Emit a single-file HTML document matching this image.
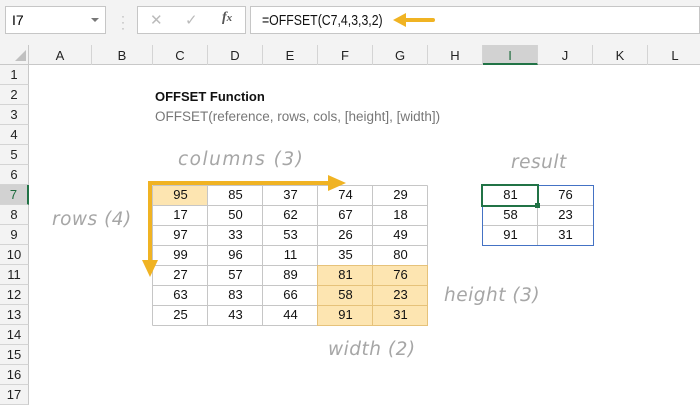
<!DOCTYPE html>
<html><head><style>
body{margin:0;width:700px;height:400px;overflow:hidden;background:#fff;font-family:"Liberation Sans",sans-serif;position:relative}
.a{position:absolute}
.ch{position:absolute;top:45px;height:20px;line-height:21px;text-align:center;font-size:13px;color:#222;border-right:1px solid #d4d4d4;box-sizing:border-box}
.rh{position:absolute;left:0;width:29px;height:20px;line-height:20px;text-align:center;font-size:13px;color:#222;border-bottom:1px solid #d4d4d4;box-sizing:border-box;background:#f3f3f3;border-right:1px solid #c8c8c8}
.c{position:absolute;width:55px;height:20px;line-height:20px;text-align:center;font-size:13px;color:#111}
.hand{position:absolute;color:#a6a6a6;font-family:"DejaVu Sans",sans-serif;font-style:italic;font-size:18.5px;letter-spacing:0.5px}
</style></head><body>
<div class="a" style="left:0;top:0;width:700px;height:45px;background:#f3f3f3"></div>
<div class="a" style="left:5px;top:6px;width:101px;height:28px;background:#fff;border:1px solid #c6c6c6;box-sizing:border-box;font-size:14px;line-height:26px;padding-left:6px">I7</div>
<div class="a" style="left:91px;top:18px;width:0;height:0;border-left:4px solid transparent;border-right:4px solid transparent;border-top:4px solid #777"></div>
<div class="a" style="left:121px;top:13px;color:#aaa;font-size:12px;line-height:6px">·<br>·<br>·</div>
<div class="a" style="left:137px;top:6px;width:109px;height:28px;background:#fff;border:1px solid #c6c6c6;box-sizing:border-box"></div>
<div class="a" style="left:150px;top:11px;color:#bbb;font-size:15px">✕</div>
<div class="a" style="left:185px;top:11px;color:#bbb;font-size:15px">✓</div>
<div class="a" style="left:222px;top:10px;color:#555;font-size:14px;font-style:italic;font-family:'Liberation Serif',serif;font-weight:bold">f<span style="font-size:11px">x</span></div>
<div class="a" style="left:250px;top:6px;width:450px;height:28px;background:#fff;border:1px solid #c6c6c6;box-sizing:border-box"></div>
<div class="a" style="left:262px;top:7px;font-size:15px;line-height:27px;color:#111;transform:scaleX(0.82);transform-origin:0 0;white-space:nowrap">=OFFSET(C7,4,3,3,2)</div>
<svg class="a" style="left:391px;top:12px" width="45" height="16"><path d="M13 8H42" stroke="#f0b323" stroke-width="4" stroke-linecap="round"/><path d="M2 8L15 1V15Z" fill="#f0b323"/></svg>
<div class="a" style="left:0;top:45px;width:700px;height:20px;background:#f3f3f3;border-bottom:1px solid #c8c8c8;box-sizing:border-box"></div>
<div class="a" style="left:0;top:45px;width:29px;height:20px;border-right:1px solid #c8c8c8;box-sizing:border-box"></div>
<div class="a" style="left:15px;top:50px;width:0;height:0;border-left:11px solid transparent;border-bottom:11px solid #c0c0c0"></div>
<div class="ch" style="left:29px;width:63px">A</div>
<div class="ch" style="left:92px;width:61px">B</div>
<div class="ch" style="left:153px;width:55px">C</div>
<div class="ch" style="left:208px;width:55px">D</div>
<div class="ch" style="left:263px;width:55px">E</div>
<div class="ch" style="left:318px;width:55px">F</div>
<div class="ch" style="left:373px;width:55px">G</div>
<div class="ch" style="left:428px;width:55px">H</div>
<div class="ch" style="left:483px;width:55px;background:#d2d2d2;border-bottom:2px solid #217346;color:#1e6b3d">I</div>
<div class="ch" style="left:538px;width:55px">J</div>
<div class="ch" style="left:593px;width:55px">K</div>
<div class="ch" style="left:648px;width:55px">L</div>
<div class="rh" style="top:65px">1</div><div class="rh" style="top:85px">2</div><div class="rh" style="top:105px">3</div><div class="rh" style="top:125px">4</div><div class="rh" style="top:145px">5</div><div class="rh" style="top:165px">6</div>
<div class="rh" style="top:185px;background:#d2d2d2;color:#1e6b3d;border-right:2px solid #217346">7</div>
<div class="rh" style="top:205px">8</div><div class="rh" style="top:225px">9</div><div class="rh" style="top:245px">10</div><div class="rh" style="top:265px">11</div><div class="rh" style="top:285px">12</div><div class="rh" style="top:305px">13</div><div class="rh" style="top:325px">14</div><div class="rh" style="top:345px">15</div><div class="rh" style="top:365px">16</div><div class="rh" style="top:385px">17</div>
<div class="a" style="left:155px;top:89px;font-size:13px;font-weight:bold;color:#111">OFFSET Function</div>
<div class="a" style="left:155px;top:109px;font-size:13.5px;color:#777">OFFSET(reference, rows, cols, [height], [width])</div>
<svg class="a" style="left:0;top:0" width="700" height="400">
<rect x="153" y="185" width="55" height="20" fill="#fde5b1"/>
<rect x="318" y="265" width="110" height="60" fill="#fde5b1"/>
<g stroke="#c6c6c6" stroke-width="1">
<path d="M152.5 185.5H427.5M152.5 205.5H427.5M152.5 225.5H427.5M152.5 245.5H427.5M152.5 265.5H427.5M152.5 285.5H427.5M152.5 305.5H427.5M152.5 325.5H427.5"/>
<path d="M152.5 185.5V325.5M207.5 185.5V325.5M262.5 185.5V325.5M317.5 185.5V325.5M372.5 185.5V325.5M427.5 185.5V325.5"/>
<path d="M482.5 205.5H593.5M482.5 225.5H593.5M537.5 185.5V245.5"/>
</g>
<g stroke="#e6c27a"><path d="M317.5 265.5H427.5V325.5H317.5Z M317.5 285.5H427.5M317.5 305.5H427.5M372.5 265.5V325.5" fill="none"/></g>
<rect x="482.5" y="185.5" width="111" height="60" fill="none" stroke="#4472c4"/>
<rect x="482" y="185" width="56" height="21" fill="none" stroke="#217346" stroke-width="2"/>
<rect x="535" y="203" width="5" height="5" fill="#217346"/>
<path d="M150 183H330" stroke="#f0b323" stroke-width="4"/>
<path d="M328 175L346 183L328 191Z" fill="#f0b323"/>
<path d="M150 181V262" stroke="#f0b323" stroke-width="4"/>
<path d="M142 260L150 277L158 260Z" fill="#f0b323"/>
</svg>
<div class="c" style="left:153px;top:185px">95</div><div class="c" style="left:208px;top:185px">85</div><div class="c" style="left:263px;top:185px">37</div><div class="c" style="left:318px;top:185px">74</div><div class="c" style="left:373px;top:185px">29</div>
<div class="c" style="left:153px;top:205px">17</div><div class="c" style="left:208px;top:205px">50</div><div class="c" style="left:263px;top:205px">62</div><div class="c" style="left:318px;top:205px">67</div><div class="c" style="left:373px;top:205px">18</div>
<div class="c" style="left:153px;top:225px">97</div><div class="c" style="left:208px;top:225px">33</div><div class="c" style="left:263px;top:225px">53</div><div class="c" style="left:318px;top:225px">26</div><div class="c" style="left:373px;top:225px">49</div>
<div class="c" style="left:153px;top:245px">99</div><div class="c" style="left:208px;top:245px">96</div><div class="c" style="left:263px;top:245px">11</div><div class="c" style="left:318px;top:245px">35</div><div class="c" style="left:373px;top:245px">80</div>
<div class="c" style="left:153px;top:265px">27</div><div class="c" style="left:208px;top:265px">57</div><div class="c" style="left:263px;top:265px">89</div><div class="c" style="left:318px;top:265px">81</div><div class="c" style="left:373px;top:265px">76</div>
<div class="c" style="left:153px;top:285px">63</div><div class="c" style="left:208px;top:285px">83</div><div class="c" style="left:263px;top:285px">66</div><div class="c" style="left:318px;top:285px">58</div><div class="c" style="left:373px;top:285px">23</div>
<div class="c" style="left:153px;top:305px">25</div><div class="c" style="left:208px;top:305px">43</div><div class="c" style="left:263px;top:305px">44</div><div class="c" style="left:318px;top:305px">91</div><div class="c" style="left:373px;top:305px">31</div>
<div class="c" style="left:483px;top:185px">81</div><div class="c" style="left:538px;top:185px">76</div>
<div class="c" style="left:483px;top:205px">58</div><div class="c" style="left:538px;top:205px">23</div>
<div class="c" style="left:483px;top:225px">91</div><div class="c" style="left:538px;top:225px">31</div>
<div class="hand" style="left:178px;top:149px;letter-spacing:1.5px">columns (3)</div>
<div class="hand" style="left:52px;top:209px">rows (4)</div>
<div class="hand" style="left:511px;top:152px">result</div>
<div class="hand" style="left:444px;top:285px">height (3)</div>
<div class="hand" style="left:328px;top:339px">width (2)</div>
</body></html>
